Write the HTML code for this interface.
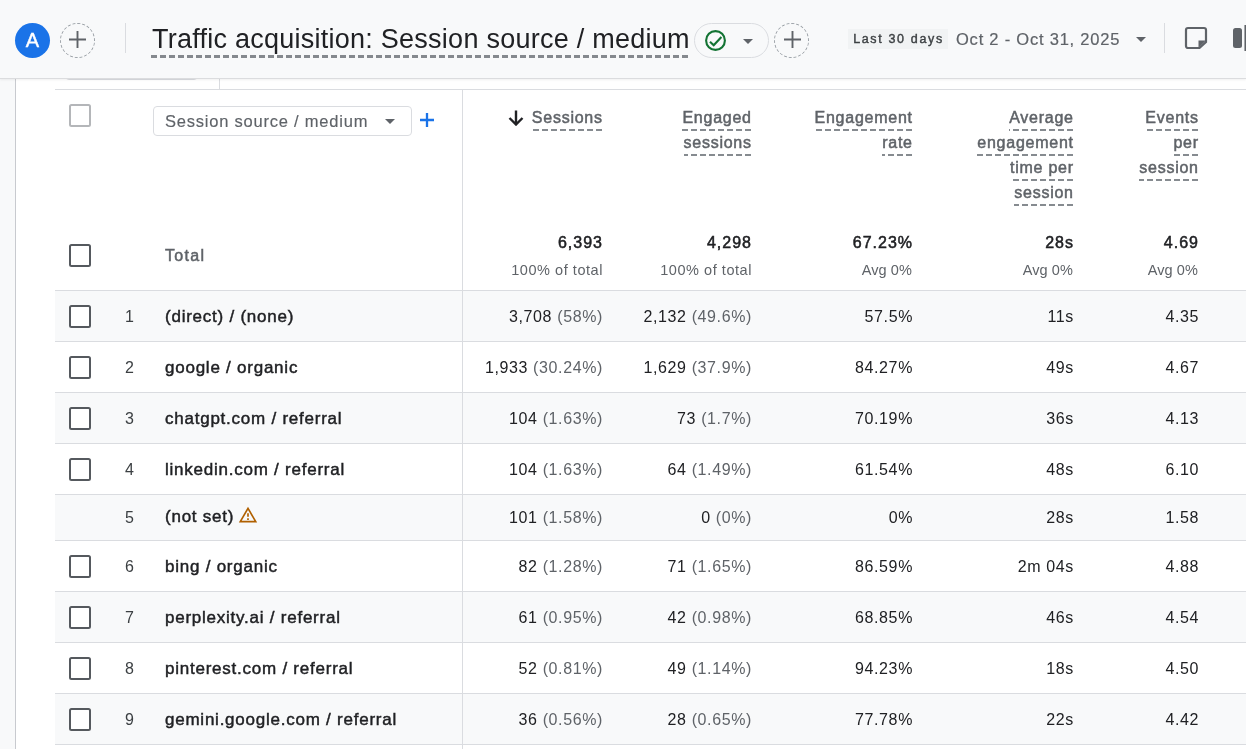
<!DOCTYPE html>
<html lang="en">
<head>
<meta charset="utf-8">
<title>Traffic acquisition: Session source / medium</title>
<style>
  html,body{margin:0;padding:0;}
  body{width:1246px;height:749px;overflow:hidden;background:#fff;position:relative;
       font-family:"Liberation Sans",sans-serif;color:#202124;}
  .page{position:absolute;left:0;top:0;width:1246px;height:749px;will-change:transform;}
  /* ---------- top bar ---------- */
  .topbar{position:absolute;left:0;top:0;width:1246px;height:78px;background:#f8f9fa;z-index:5;
          box-shadow:0 1px 0 #dbdcde,0 2px 2px rgba(60,64,67,.08);}
  .avatar{position:absolute;left:15px;top:23px;width:35px;height:35px;border-radius:50%;background:#1a73e8;
          color:#fff;font-size:20px;line-height:34px;text-align:center;-webkit-text-stroke:.4px #fff;}
  .addc{position:absolute;top:23px;width:33px;height:33px;border-radius:50%;border:1px dashed #9aa0a6;}
  .addc svg{position:absolute;left:8.500px;top:7.500px;}
  .vsep{position:absolute;top:23px;width:1px;height:30px;background:#dadce0;}
  .title{position:absolute;left:152px;top:22px;height:34px;line-height:34px;font-size:27px;color:#202124;white-space:nowrap;
         letter-spacing:.25px;}
  .title-ul{position:absolute;left:151px;top:55px;width:538px;height:3px;
         background:repeating-linear-gradient(90deg,#85898e 0,#85898e 6px,transparent 6px,transparent 9px);}
  .pill{position:absolute;left:694px;top:23px;width:73px;height:33px;border:1px solid #dadce0;border-radius:18px;}
  .pill svg{position:absolute;}
  .chip{position:absolute;left:848px;top:29px;width:100px;height:20px;background:#f1f3f4;
        font-size:12.500px;line-height:21px;text-align:center;color:#3c4043;letter-spacing:1.65px;text-indent:1px;-webkit-text-stroke:.4px;}
  .date{position:absolute;left:956px;top:28px;height:22px;line-height:22px;font-size:16.500px;color:#5f6368;white-space:nowrap;letter-spacing:.78px;-webkit-text-stroke:.2px;}
  .caret{position:absolute;width:0;height:0;border-left:5px solid transparent;border-right:5px solid transparent;border-top:5px solid #5f6368;}
  /* ---------- page ---------- */
  .leftstrip{position:absolute;left:0;top:78px;width:15px;height:671px;background:#f8f9fa;border-right:1px solid #c8cacf;}
  .stub-box{position:absolute;left:65px;top:60px;width:131px;height:18px;border:1px solid #dadce0;border-radius:4px;}
  .stub-v{position:absolute;left:219px;top:78px;width:1px;height:11px;background:#dadce0;}
  .table{position:absolute;left:55px;top:89px;width:1191px;height:660px;border-top:1px solid #dadce0;}
  .vline{position:absolute;left:407px;top:0;width:1px;height:660px;background:#dadce0;z-index:2;}
  .cb{display:block;width:18px;height:19px;border:2px solid #55595e;border-radius:2.500px;background:#fff;}
  .cb.dis{border-color:#b4b6b9;}
  .thead{position:absolute;left:0;top:0px;width:1191px;height:200px;}
  .sel{position:absolute;left:98px;top:16px;width:257px;height:28px;border:1px solid #dadce0;border-radius:4px;}
  .sel span{position:absolute;left:11px;top:4px;font-size:16.500px;line-height:21px;color:#5f6368;white-space:nowrap;letter-spacing:.78px;-webkit-text-stroke:.15px;}
  .plus{position:absolute;left:365px;top:23px;}
  .h{position:absolute;top:15px;font-size:16px;line-height:25px;color:#5f6368;text-align:right;-webkit-text-stroke:.5px #5f6368;letter-spacing:.75px;white-space:nowrap;}
  .h span{display:inline-block;line-height:25px;height:25px;padding-bottom:2px;margin-bottom:-2px;margin-right:-.75px;
     background:repeating-linear-gradient(270deg,#868b90 0,#868b90 6px,transparent 6px,transparent 9px) left 24px/calc(100% - .75px) 2px no-repeat;}
  .tot{position:absolute;font-size:16px;color:#202124;text-align:right;white-space:nowrap;-webkit-text-stroke:.5px;letter-spacing:1px;}
  .sub{position:absolute;font-size:14.500px;color:#5f6368;text-align:right;white-space:nowrap;letter-spacing:.55px;}
  .row{position:absolute;left:0;width:1191px;height:50px;border-top:1px solid #dadce0;font-size:16px;}
  .row.odd{background:#f8f9fa;}
  .row > div{position:absolute;top:1px;height:50px;line-height:50px;white-space:nowrap;}
  .c-cb{left:14px;width:22px;}
  .c-cb .cb{margin-top:13px;}
  .c-n{left:60px;width:29px;text-align:center;color:#3c4043;}
  .c-dim{left:110px;color:#202124;font-size:17px;-webkit-text-stroke:.45px;letter-spacing:.76px;}
  .m{text-align:right;color:#202124;letter-spacing:.62px;}
  .pct{color:#5f6368;}
  .m1{right:643px;} .m2{right:494px;} .m3{right:333px;} .m4{right:172px;} .m5{right:47px;}
  .row.nocb{height:45px;}
  .row.nocb > div{top:0;height:45px;line-height:45px;}
  .row.nocb > .c-dim{top:-1px;}
  .warn{vertical-align:-3px;margin-left:4px;}
</style>
</head>
<body>
<div class="page">
<div class="topbar">
  <div class="avatar">A</div>
  <div class="addc" style="left:59.500px;"><svg style="left:8.500px;top:6.500px;" width="17" height="17" viewBox="0 0 17 17"><path d="M8.500 0v17M0 8.500h17" stroke="#5f6368" stroke-width="1.900" fill="none"/></svg></div>
  <div class="vsep" style="left:125px;"></div>
  <div class="title">Traffic acquisition: Session source / medium</div>
  <div class="title-ul"></div>
  <div class="pill">
    <svg style="left:10.400px;top:6px;" width="21" height="21" viewBox="0 0 21 21"><circle cx="10.500" cy="10.500" r="9.400" fill="none" stroke="#137333" stroke-width="2.100"/><path d="M5 11.800l3.700 3.500 7.700-8.300" fill="none" stroke="#137333" stroke-width="2.100"/></svg>
    <div class="caret" style="left:48px;top:14.500px;"></div>
  </div>
  <div class="addc" style="left:773.500px;"><svg style="left:9px;top:6.500px;" width="17" height="17" viewBox="0 0 17 17"><path d="M8.500 0v17M0 8.500h17" stroke="#5f6368" stroke-width="1.900" fill="none"/></svg></div>
  <div class="chip">Last 30 days</div>
  <div class="date">Oct 2 - Oct 31, 2025</div>
  <div class="caret" style="left:1136px;top:37px;"></div>
  <div class="vsep" style="left:1164px;"></div>
  <svg style="position:absolute;left:1184px;top:26px;" width="24" height="24" viewBox="0 0 24 24"><path d="M4 2h16a2 2 0 0 1 2 2v12l-6.5 6H4a2 2 0 0 1-2-2V4a2 2 0 0 1 2-2z" fill="none" stroke="#5f6368" stroke-width="2.2"/><path d="M14.5 22v-7.5H22z" fill="#5f6368"/></svg>
  <div style="position:absolute;left:1233px;top:28px;width:9px;height:20px;border-radius:2.5px;background:#5f6368;"></div>
  <div style="position:absolute;left:1245px;top:25px;width:1px;height:26px;background:#5f6368;box-shadow:-1px 0 0 rgba(95,99,104,.55);"></div>
</div>
<div class="leftstrip"></div>
<div class="stub-box"></div>
<div class="stub-v"></div>
<div class="table">
  <div class="vline"></div>
  <div class="thead">
    <div style="position:absolute;left:14px;top:14px;"><span class="cb dis"></span></div>
    <div class="sel"><span>Session source / medium</span><div class="caret" style="left:231px;top:12px;"></div></div>
    <svg class="plus" width="14" height="14" viewBox="0 0 14 14"><path d="M7 0v14M0 7h14" stroke="#1a73e8" stroke-width="2.300" fill="none"/></svg>
    <svg style="position:absolute;left:453px;top:20px;" width="16" height="16" viewBox="0 0 16 16"><path d="M8 0.500v13.500M1.500 8l6.500 6.500 6.500-6.500" stroke="#202124" stroke-width="2.4" fill="none"/></svg>
    <div class="h" style="right:644px;"><span>Sessions</span></div>
    <div class="h" style="right:495px;"><span>Engaged</span><br><span>sessions</span></div>
    <div class="h" style="right:334px;"><span>Engagement</span><br><span>rate</span></div>
    <div class="h" style="right:173px;"><span>Average</span><br><span>engagement</span><br><span>time per</span><br><span>session</span></div>
    <div class="h" style="right:48px;"><span>Events</span><br><span>per</span><br><span>session</span></div>
    <div style="position:absolute;left:14px;top:154px;"><span class="cb"></span></div>
    <div class="tot" style="left:110px;top:157px;color:#5f6368;font-size:16px;letter-spacing:1.3px;">Total</div>
    <div class="tot" style="right:643px;top:144px;">6,393</div><div class="sub" style="right:643px;top:172px;">100% of total</div>
    <div class="tot" style="right:494px;top:144px;">4,298</div><div class="sub" style="right:494px;top:172px;">100% of total</div>
    <div class="tot" style="right:333px;top:144px;">67.23%</div><div class="sub" style="right:334px;top:172px;letter-spacing:.1px;">Avg 0%</div>
    <div class="tot" style="right:172px;top:144px;">28s</div><div class="sub" style="right:173px;top:172px;letter-spacing:.1px;">Avg 0%</div>
    <div class="tot" style="right:47px;top:144px;">4.69</div><div class="sub" style="right:48px;top:172px;letter-spacing:.1px;">Avg 0%</div>
  </div>
  <div class="tbody">
    <div class="row odd" style="top:200px;">
      <div class="c-cb"><span class="cb"></span></div><div class="c-n">1</div><div class="c-dim"><span class="dimt">(direct) / (none)</span></div>
      <div class="m m1">3,708 <span class="pct">(58%)</span></div><div class="m m2">2,132 <span class="pct">(49.6%)</span></div><div class="m m3">57.5%</div><div class="m m4">11s</div><div class="m m5">4.35</div>
    </div>
    <div class="row" style="top:251px;">
      <div class="c-cb"><span class="cb"></span></div><div class="c-n">2</div><div class="c-dim"><span class="dimt">google / organic</span></div>
      <div class="m m1">1,933 <span class="pct">(30.24%)</span></div><div class="m m2">1,629 <span class="pct">(37.9%)</span></div><div class="m m3">84.27%</div><div class="m m4">49s</div><div class="m m5">4.67</div>
    </div>
    <div class="row odd" style="top:302px;">
      <div class="c-cb"><span class="cb"></span></div><div class="c-n">3</div><div class="c-dim"><span class="dimt">chatgpt.com / referral</span></div>
      <div class="m m1">104 <span class="pct">(1.63%)</span></div><div class="m m2">73 <span class="pct">(1.7%)</span></div><div class="m m3">70.19%</div><div class="m m4">36s</div><div class="m m5">4.13</div>
    </div>
    <div class="row" style="top:353px;">
      <div class="c-cb"><span class="cb"></span></div><div class="c-n">4</div><div class="c-dim"><span class="dimt">linkedin.com / referral</span></div>
      <div class="m m1">104 <span class="pct">(1.63%)</span></div><div class="m m2">64 <span class="pct">(1.49%)</span></div><div class="m m3">61.54%</div><div class="m m4">48s</div><div class="m m5">6.10</div>
    </div>
    <div class="row odd nocb" style="top:404px;">
      <div class="c-cb"></div><div class="c-n">5</div><div class="c-dim"><span class="dimt">(not set)</span><svg class="warn" viewBox="0 0 24 24" width="20" height="20"><path d="M1 21h22L12 2 1 21zm3.47-2L12 5.99 19.53 19H4.470zM11 16h2v2h-2zm0-6h2v4h-2z" fill="#b06000"/></svg></div>
      <div class="m m1">101 <span class="pct">(1.58%)</span></div><div class="m m2">0 <span class="pct">(0%)</span></div><div class="m m3">0%</div><div class="m m4">28s</div><div class="m m5">1.58</div>
    </div>
    <div class="row" style="top:450px;">
      <div class="c-cb"><span class="cb"></span></div><div class="c-n">6</div><div class="c-dim"><span class="dimt">bing / organic</span></div>
      <div class="m m1">82 <span class="pct">(1.28%)</span></div><div class="m m2">71 <span class="pct">(1.65%)</span></div><div class="m m3">86.59%</div><div class="m m4">2m 04s</div><div class="m m5">4.88</div>
    </div>
    <div class="row odd" style="top:501px;">
      <div class="c-cb"><span class="cb"></span></div><div class="c-n">7</div><div class="c-dim"><span class="dimt">perplexity.ai / referral</span></div>
      <div class="m m1">61 <span class="pct">(0.95%)</span></div><div class="m m2">42 <span class="pct">(0.98%)</span></div><div class="m m3">68.85%</div><div class="m m4">46s</div><div class="m m5">4.54</div>
    </div>
    <div class="row" style="top:552px;">
      <div class="c-cb"><span class="cb"></span></div><div class="c-n">8</div><div class="c-dim"><span class="dimt">pinterest.com / referral</span></div>
      <div class="m m1">52 <span class="pct">(0.81%)</span></div><div class="m m2">49 <span class="pct">(1.14%)</span></div><div class="m m3">94.23%</div><div class="m m4">18s</div><div class="m m5">4.50</div>
    </div>
    <div class="row odd" style="top:603px;">
      <div class="c-cb"><span class="cb"></span></div><div class="c-n">9</div><div class="c-dim"><span class="dimt">gemini.google.com / referral</span></div>
      <div class="m m1">36 <span class="pct">(0.56%)</span></div><div class="m m2">28 <span class="pct">(0.65%)</span></div><div class="m m3">77.78%</div><div class="m m4">22s</div><div class="m m5">4.42</div>
    </div>
    <div class="row" style="top:654px;height:10px;"></div>
  </div>
</div>
</div>
</body>
</html>
